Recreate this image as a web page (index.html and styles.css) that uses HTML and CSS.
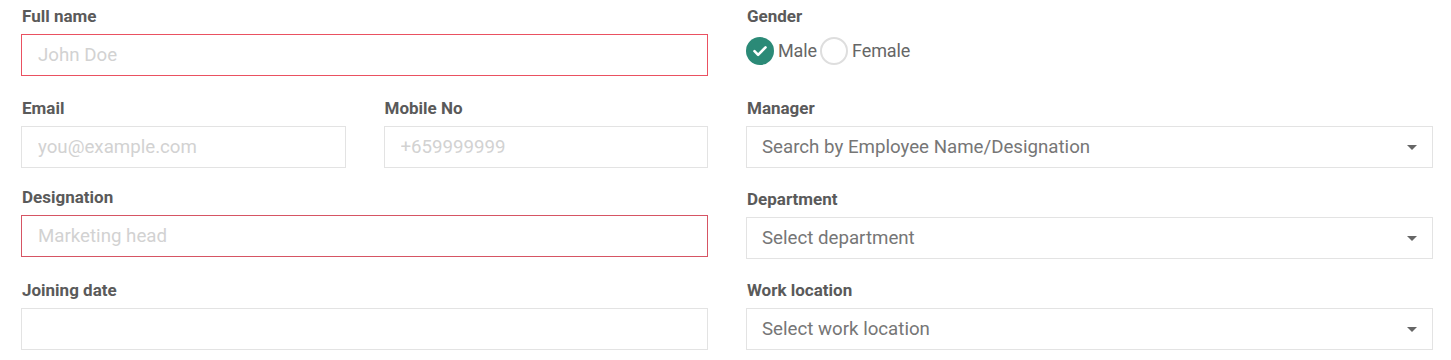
FILE: index.html
```html
<!DOCTYPE html>
<html>
<head>
<meta charset="utf-8">
<link rel="stylesheet" href="styles.css">
</head>
<body>
<form class="form">
  <div class="col col-left">
    <div class="field f-name">
      <label class="label">Full name</label>
      <input class="input input-error" type="text" placeholder="John Doe">
    </div>
    <div class="pair">
      <div class="field">
        <label class="label">Email</label>
        <input class="input" type="text" placeholder="you@example.com">
      </div>
      <div class="field">
        <label class="label">Mobile No</label>
        <input class="input" type="text" placeholder="+659999999">
      </div>
    </div>
    <div class="field f-desig">
      <label class="label">Designation</label>
      <input class="input input-error2" type="text" placeholder="Marketing head">
    </div>
    <div class="field">
      <label class="label">Joining date</label>
      <input class="input" type="text">
    </div>
  </div>
  <div class="col col-right">
    <div class="field">
      <label class="label">Gender</label>
      <div class="radios">
        <span class="radio radio-on">
          <svg width="28" height="28" viewBox="0 0 28 28"><circle cx="14" cy="14" r="14" fill="#2b8a77"/><path d="M8.5 14.2l3.6 3.6 7.4-7.4" fill="none" stroke="#fff" stroke-width="2.6" stroke-linecap="round" stroke-linejoin="round"/></svg>
        </span>
        <span class="radio-text">Male</span>
        <span class="radio radio-off"></span>
        <span class="radio-text">Female</span>
      </div>
    </div>
    <div class="field">
      <label class="label">Manager</label>
      <div class="select"><span>Search by Employee Name/Designation</span><i class="caret"></i></div>
    </div>
    <div class="field">
      <label class="label">Department</label>
      <div class="select"><span>Select department</span><i class="caret"></i></div>
    </div>
    <div class="field">
      <label class="label">Work location</label>
      <div class="select"><span>Select work location</span><i class="caret"></i></div>
    </div>
  </div>
</form>
</body>
</html>
```
FILE: styles.css
```css
* { box-sizing: border-box; }
body {
  margin: 0;
  background: #fff;
  font-family: Roboto, "Liberation Sans", sans-serif;
}
.form {
  display: grid;
  grid-template-columns: 1fr 1fr;
  column-gap: 38px;
  padding: 6px 18px 0 21px;
}
.col {
  display: flex;
  flex-direction: column;
  gap: 21px;
}
.col-left { gap: 0; }
.col-left > .field,
.col-left > .pair { margin-bottom: 20px; }
.col-left > .f-name { margin-bottom: 22px; }
.col-left > .pair { margin-bottom: 19px; }
.col-left > .f-desig { margin-bottom: 23px; }
.pair {
  display: grid;
  grid-template-columns: 1fr 1fr;
  column-gap: 38px;
}
.field {
  display: flex;
  flex-direction: column;
}
.label {
  font-size: 17px;
  line-height: 20px;
  font-weight: 700;
  color: #5a5a5a;
  margin: 0 0 8px 1px;
}
.input {
  height: 42px;
  width: 100%;
  border: 1px solid #e3e3e3;
  border-radius: 0;
  padding: 0 16px;
  font-family: Roboto, "Liberation Sans", sans-serif;
  font-size: 18.7px;
  color: #555;
  outline: none;
  background: #fff;
}
.input::placeholder { color: #d2d2d2; }
.input-error { border-color: #ea5161; }
.input-error2 { border-color: #d65564; }
.radios {
  height: 43px;
  display: flex;
  align-items: flex-start;
  padding-top: 3px;
  gap: 4px;
}
.radio {
  width: 28px;
  height: 28px;
  border-radius: 50%;
  display: block;
  flex: none;
}
.radio svg { display: block; }
.radio-off {
  border: 2px solid #dedede;
  background: #fff;
}
.radio-text {
  font-size: 18px;
  line-height: 28px;
  color: #666;
  letter-spacing: -0.1px;
}
.radios .radio-off { margin-left: -1px; }
.select {
  height: 42px;
  border: 1px solid #e3e3e3;
  display: flex;
  align-items: center;
  justify-content: space-between;
  padding: 0 15px 0 15px;
  font-size: 18.7px;
  color: #767676;
}
.caret {
  width: 0;
  height: 0;
  border-left: 5px solid transparent;
  border-right: 5px solid transparent;
  border-top: 5px solid #666;
}
```
